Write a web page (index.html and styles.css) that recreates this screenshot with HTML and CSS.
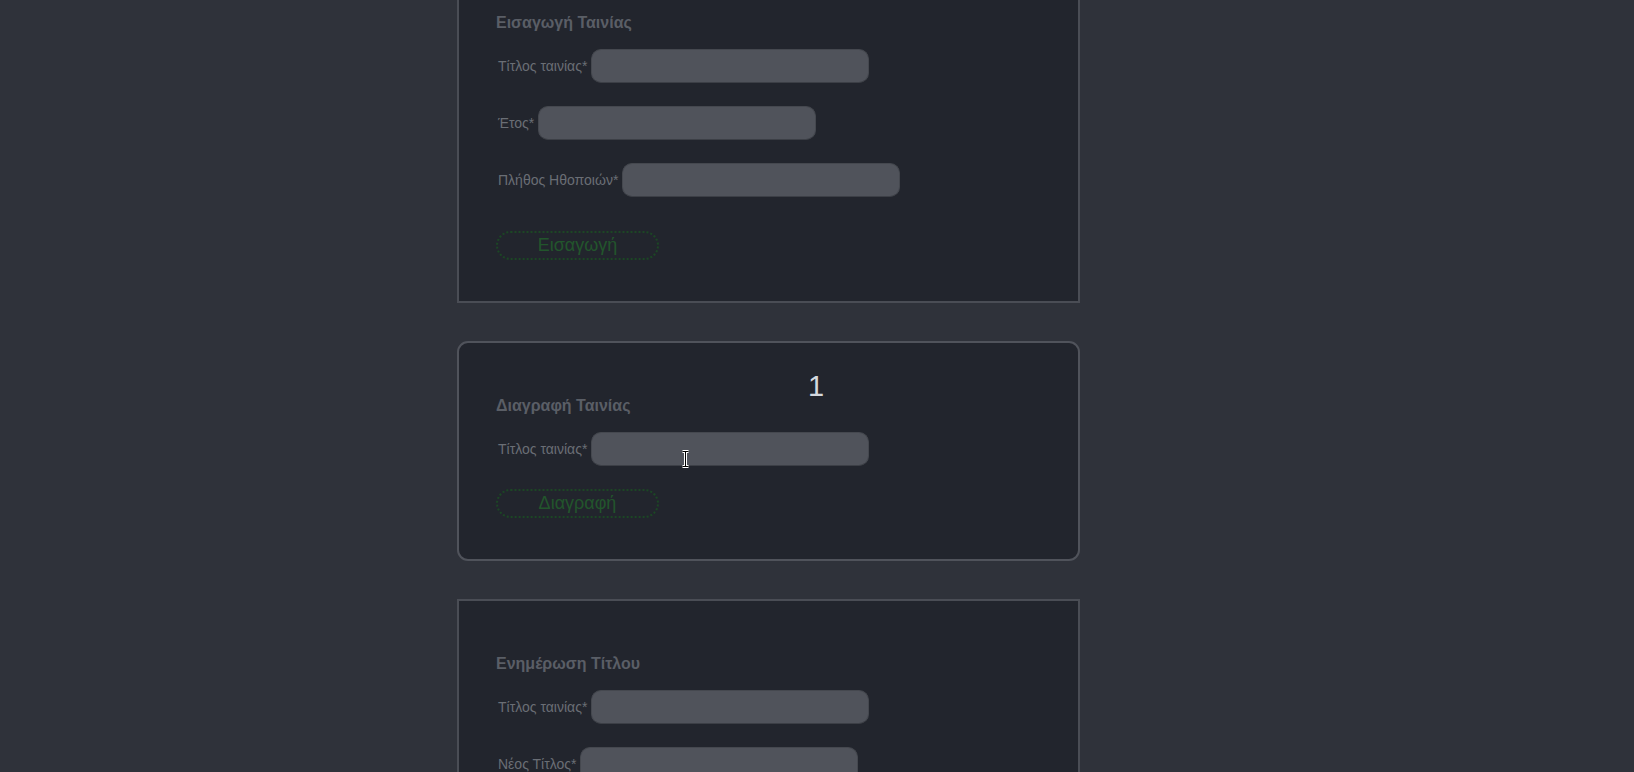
FILE: index.html
```html
<!DOCTYPE html>
<html lang="el">
<head>
<meta charset="utf-8">
<title>Ταινίες</title>
<link rel="stylesheet" href="styles.css">
</head>
<body>
<main class="page">
  <section class="card">
    <h2 class="card-title">Εισαγωγή Ταινίας</h2>
    <div class="row"><label class="label">Τίτλος ταινίας*</label><input class="field" type="text"></div>
    <div class="row"><label class="label">Έτος*</label><input class="field" type="text"></div>
    <div class="row"><label class="label">Πλήθος Ηθοποιών*</label><input class="field" type="text"></div>
    <button class="btn btn-spaced">Εισαγωγή</button>
  </section>

  <section class="card card-hover">
    <div class="result">1</div>
    <h2 class="card-title">Διαγραφή Ταινίας</h2>
    <div class="row"><label class="label">Τίτλος ταινίας*</label><input class="field" type="text"></div>
    <button class="btn">Διαγραφή</button>
    <svg class="cursor" width="9" height="18" viewBox="0 0 9 18">
      <path d="M1.5 1.5h6M4.5 1.5v15M1.5 16.5h6" stroke="#fff" stroke-width="3" fill="none"/>
      <path d="M1.5 1.5h6M4.5 1.5v15M1.5 16.5h6" stroke="#000" stroke-width="1" fill="none"/>
    </svg>
  </section>

  <section class="card">
    <h2 class="card-title">Ενημέρωση Τίτλου</h2>
    <div class="row"><label class="label">Τίτλος ταινίας*</label><input class="field" type="text"></div>
    <div class="row"><label class="label">Νέος Τίτλος*</label><input class="field" type="text"></div>
    <button class="btn">Ενημέρωση</button>
  </section>
</main>
</body>
</html>
```

FILE: styles.css
```css
html, body {
  margin: 0;
  padding: 0;
  height: 100%;
  overflow: hidden;
}

body {
  background: #2f323a;
  font-family: "Liberation Sans", Arial, sans-serif;
}

.page {
  width: 623px;
  margin: -42px 0 0 457px;
  display: flex;
  flex-direction: column;
  gap: 38px;
}

.card {
  position: relative;
  box-sizing: border-box;
  background: #22252d;
  border: 2px solid #4a4d55;
  padding: 53px 37px 41px;
  display: flex;
  flex-direction: column;
  align-items: flex-start;
}

.card-hover {
  border-radius: 11px;
  border-color: #50535b;
}

.card-title {
  margin: 0 0 17px;
  font-size: 16px;
  line-height: 19px;
  font-weight: bold;
  color: #5a5e66;
}

.row {
  display: flex;
  align-items: center;
  gap: 4px;
  margin-bottom: 23px;
}

.label {
  margin-left: 2px;
  font-size: 14px;
  color: #6a6e75;
}

.field {
  box-sizing: border-box;
  width: 278px;
  height: 34px;
  margin: 0;
  border: 1px solid #45484f;
  border-bottom-color: #3c3f46;
  border-radius: 10px;
  background: #50535b;
  outline: none;
}

.btn {
  box-sizing: border-box;
  width: 163px;
  height: 29px;
  padding: 0;
  border: 2px dotted #1c4625;
  border-radius: 15px;
  background: transparent;
  color: #22552c;
  font-family: "Liberation Sans", Arial, sans-serif;
  font-size: 18px;
  line-height: 25px;
}

.btn-spaced {
  margin-top: 11px;
}

.result {
  position: absolute;
  left: 349px;
  top: 26px;
  font-size: 29px;
  line-height: 34px;
  color: #d4d8de;
}

.cursor {
  position: absolute;
  left: 222px;
  top: 107px;
}
```
